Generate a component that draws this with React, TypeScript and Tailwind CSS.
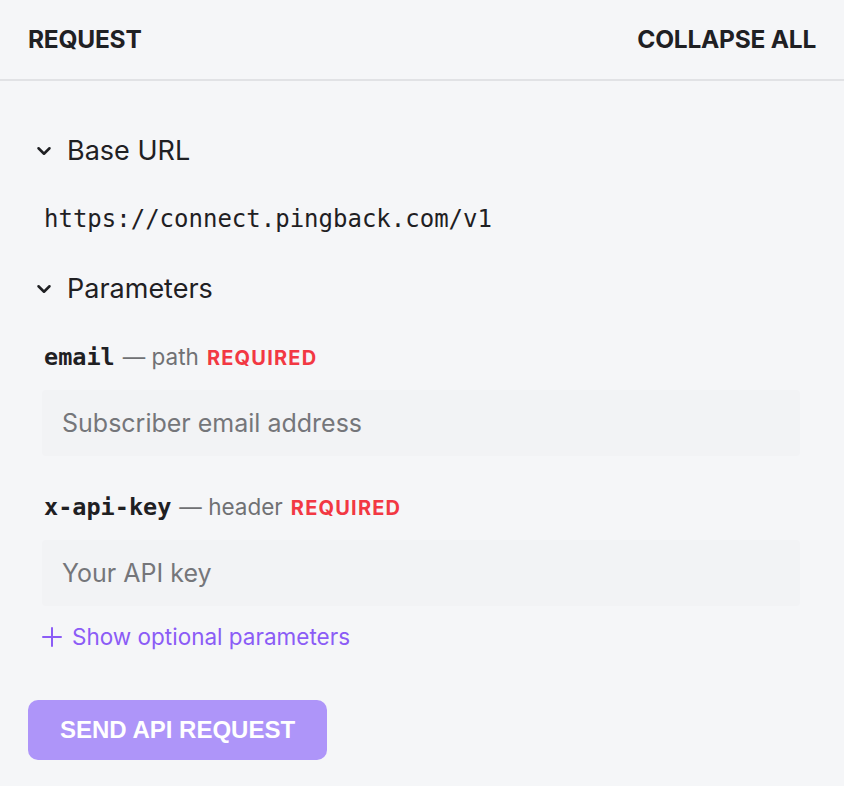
import { ChevronDown } from 'lucide-react';

const inter = { fontFamily: 'Inter, "Noto Sans", sans-serif' };

const SectionTitle = ({ label }: { label: string }) => (
  <div className="flex items-center h-[36px]">
    <ChevronDown size={22} strokeWidth={2.75} className="text-[#1f2023] ml-[5px]" />
    <span className="ml-[12px] text-[27px] text-[#1f2023] font-[Inter]">{label}</span>
  </div>
);

const Param = ({ name, where, placeholder }: { name: string; where: string; placeholder: string }) => (
  <div>
    <div className="flex items-baseline h-[30px] ml-[16px]">
      <span className="font-['DejaVu_Sans_Mono',monospace] font-bold text-[23.5px] text-[#1f2023]">{name}</span>
      <span className="font-[Inter] text-[22.5px] text-[#707174] ml-[8px]">— {where}</span>
      <span className="font-[Inter] font-bold text-[20px] tracking-[0.06em] text-[#f23843] ml-[8px]">REQUIRED</span>
    </div>
    <input
      placeholder={placeholder}
      className="mt-[20px] ml-[14px] w-[758px] h-[66px] rounded-[4px] bg-[#f2f3f5] px-[20px] text-[25px] font-[Inter] placeholder:text-[#75767a] outline-none"
    />
  </div>
);

const App = () => {
  return (
    <div className="w-[844px] h-[786px] bg-[#f5f6f8] overflow-hidden" style={inter}>
      <div className="h-[81px] flex items-center justify-between px-[28px] border-b-2 border-[#e1e2e5]">
        <span className="font-bold text-[24.5px] tracking-[-0.01em] text-[#1f2023]">REQUEST</span>
        <span className="font-bold text-[24.5px] tracking-[-0.01em] text-[#1f2023]">COLLAPSE ALL</span>
      </div>

      <div className="px-[28px]">
        <div className="mt-[52px]">
          <SectionTitle label="Base URL" />
        </div>
        <div className="mt-[32px] ml-[16px] font-['DejaVu_Sans_Mono',monospace] text-[24px] text-[#1f2023] leading-[36px]">
          https://connect.pingback.com/v1
        </div>

        <div className="mt-[34px]">
          <SectionTitle label="Parameters" />
        </div>

        <div className="mt-[33px]">
          <Param name="email" where="path" placeholder="Subscriber email address" />
        </div>
        <div className="mt-[34px]">
          <Param name="x-api-key" where="header" placeholder="Your API key" />
        </div>

        <div className="mt-[18px] ml-[14px] flex items-center text-[#8b5cf6] h-[26px]">
          <svg width="20" height="20" viewBox="0 0 20 20" fill="none" stroke="currentColor" strokeWidth="2" strokeLinecap="round">
            <path d="M10 1v18M1 10h18" />
          </svg>
          <span className="ml-[10px] text-[22.5px] font-[Inter]">Show optional parameters</span>
        </div>

        <button className="mt-[50px] w-[299px] h-[60px] rounded-[10px] bg-[#ae95f9] text-white font-bold text-[24px] font-['Liberation_Sans',Arial,sans-serif]">
          SEND API REQUEST
        </button>
      </div>
    </div>
  );
};

export default App;
